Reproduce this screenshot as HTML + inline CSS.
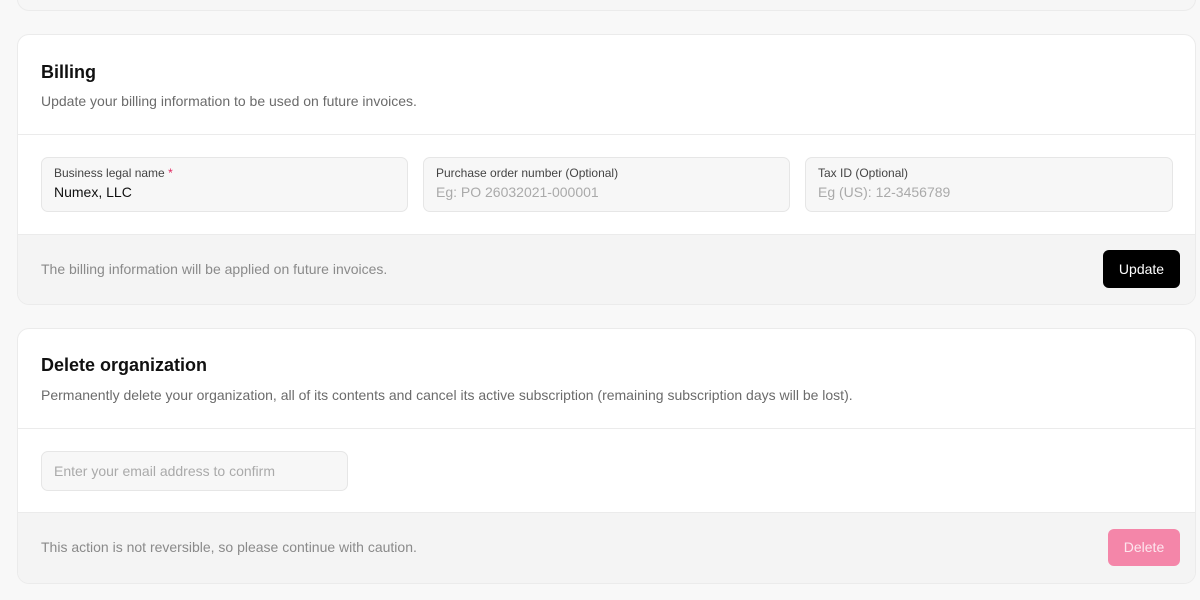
<!DOCTYPE html>
<html><head><meta charset="utf-8"><style>
*{box-sizing:border-box;margin:0;padding:0}
body{width:1200px;height:600px;background:#f8f8f8;font-family:"Liberation Sans",sans-serif;position:relative;overflow:hidden;color:#111}
.card{position:absolute;left:17px;width:1179px;background:#fff;border:1px solid #ebebeb;border-radius:12px;overflow:hidden}
.top{top:-20px;height:31px;background:#f6f6f6}
h2{position:absolute;left:23px;font-size:18px;font-weight:700;color:#111}
.desc{position:absolute;left:23px;font-size:14px;color:#6b6b6b}
.div{position:absolute;left:0;right:0;border-top:1px solid #ebebeb}
.inp{position:absolute;background:#f7f7f7;border:1px solid #e6e6e6;border-radius:7px}
.lbl{position:absolute;left:12px;top:8px;font-size:12px;color:#444}
.val{position:absolute;left:12px;top:26px;font-size:14px;color:#111}
.ph{color:#aaa}
.foot{position:absolute;left:0;right:0;bottom:0;background:#f4f4f4;border-top:1px solid #ebebeb}
.ft{position:absolute;left:23px;font-size:14px;color:#8a8a8a}
.btn{position:absolute;border-radius:6px;font-size:14px;text-align:center}
</style></head><body>
<div class="card top"></div>

<div class="card" style="top:34px;height:271px">
 <h2 style="top:27px">Billing</h2>
 <div class="desc" style="top:58px">Update your billing information to be used on future invoices.</div>
 <div class="div" style="top:99px"></div>
 <div class="inp" style="left:23px;top:122px;width:367px;height:55px"><div class="lbl">Business legal name<span style="color:#e0245e"> *</span></div><div class="val">Numex, LLC</div></div>
 <div class="inp" style="left:405px;top:122px;width:367px;height:55px"><div class="lbl">Purchase order number (Optional)</div><div class="val ph">Eg: PO 26032021-000001</div></div>
 <div class="inp" style="left:787px;top:122px;width:368px;height:55px"><div class="lbl">Tax ID (Optional)</div><div class="val ph">Eg (US): 12-3456789</div></div>
 <div class="foot" style="height:70px">
  <div class="ft" style="top:26px">The billing information will be applied on future invoices.</div>
  <div class="btn" style="left:1085px;top:15px;width:77px;height:38px;background:#000;color:#fff;line-height:38px">Update</div>
 </div>
</div>

<div class="card" style="top:328px;height:256px">
 <h2 style="top:26px">Delete organization</h2>
 <div class="desc" style="top:58px">Permanently delete your organization, all of its contents and cancel its active subscription (remaining subscription days will be lost).</div>
 <div class="div" style="top:99px"></div>
 <div class="inp" style="left:23px;top:122px;width:307px;height:40px"><div class="val ph" style="top:11px">Enter your email address to confirm</div></div>
 <div class="foot" style="height:71px">
  <div class="ft" style="top:26px">This action is not reversible, so please continue with caution.</div>
  <div class="btn" style="left:1090px;top:16px;width:72px;height:37px;background:#f486a9;color:#fde6ee;line-height:37px">Delete</div>
 </div>
</div>
</body></html>
